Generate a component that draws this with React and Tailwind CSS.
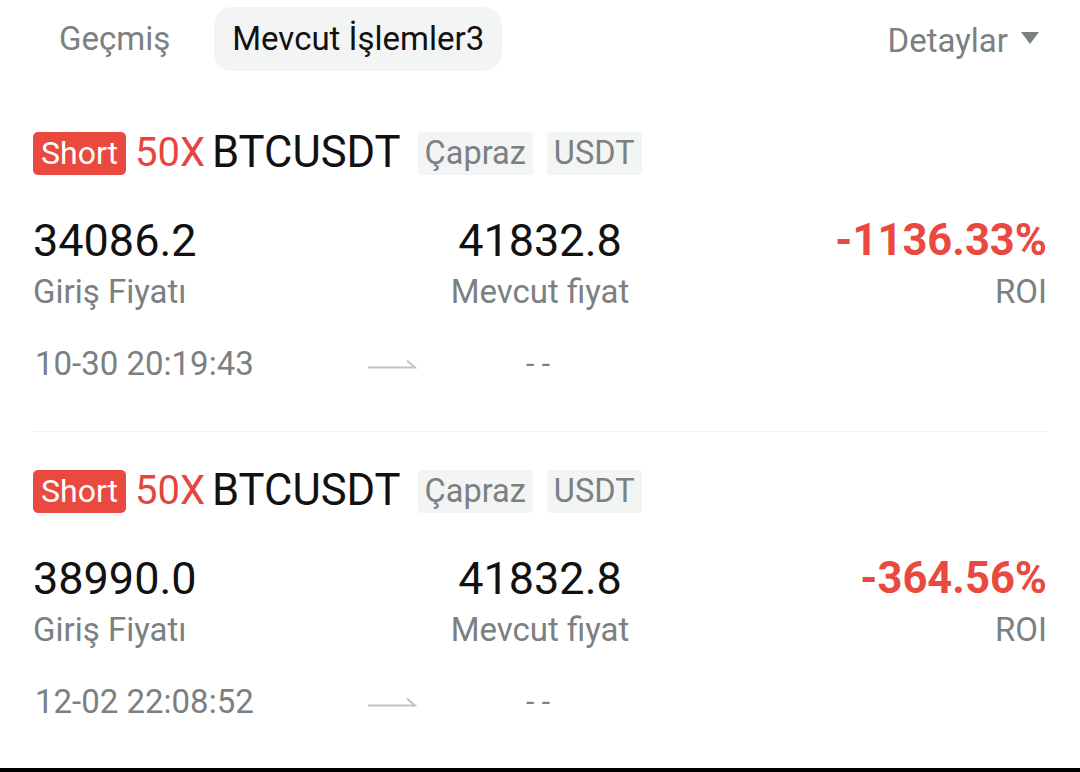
import React from "react";

const positions = [
  { entry: "34086.2", mark: "41832.8", roi: "-1136.33%", time: "10-30 20:19:43" },
  { entry: "38990.0", mark: "41832.8", roi: "-364.56%", time: "12-02 22:08:52" },
];

const Arrow = () => (
  <svg width="50" height="12" viewBox="0 0 50 12" className="block">
    <path d="M1 9.5 H48 L40 2.5" fill="none" stroke="#bfc3c5" strokeWidth="2" />
  </svg>
);

const PositionCard = ({ p, last }) => (
  <div className="px-[33px]">
    {/* header */}
    <div className="flex items-center h-[46px]">
      <span className="bg-[#e9493f] text-white text-[32px] leading-[43px] h-[43px] px-[8px] rounded-[5px]">
        Short
      </span>
      <span className="ml-[9px] text-[#e5453c] text-[40px] leading-none">50X</span>
      <span className="ml-[7px] text-[#111] text-[43.6px] leading-none">BTCUSDT</span>
      <span className="ml-[17px] bg-[#f3f5f5] text-[#7b8081] text-[32.5px] leading-[43px] h-[43px] px-[7px] rounded-[4px]">
        Çapraz
      </span>
      <span className="ml-[14px] bg-[#f3f5f5] text-[#7b8081] text-[32.5px] leading-[43px] h-[43px] px-[7px] rounded-[4px]">
        USDT
      </span>
    </div>

    {/* prices */}
    <div className="grid grid-cols-3 mt-[40px]">
      <div>
        <div className="text-[45px] leading-[50px] text-[#111]">{p.entry}</div>
        <div className="mt-[6px] text-[33px] leading-[40px] text-[#7b8081]">Giriş Fiyatı</div>
      </div>
      <div className="text-center">
        <div className="text-[45px] leading-[50px] text-[#111]">{p.mark}</div>
        <div className="mt-[6px] text-[33px] leading-[40px] text-[#7b8081]">Mevcut fiyat</div>
      </div>
      <div className="text-right">
        <div className="text-[43.5px] leading-[50px] font-bold text-[#e9493f]">{p.roi}</div>
        <div className="mt-[6px] text-[33px] leading-[40px] text-[#7b8081]">ROI</div>
      </div>
    </div>

    {/* time row */}
    <div className="grid grid-cols-3 mt-[32px] h-[40px] items-center">
      <div className="pl-[2px] text-[33px] leading-[40px] text-[#7b8081]">{p.time}</div>
      <div className="grid grid-cols-[48px_1fr_48px] items-center -ml-[4px]">
        <Arrow />
        <div className="text-center text-[30px] leading-[40px] text-[#7b8081]">- -</div>
        <div />
      </div>
      <div />
    </div>

    {!last && <div className="mt-[47px] h-px bg-[#f1f2f3]" />}
  </div>
);

export default function App() {
  return (
    <div
      className="w-[1080px] h-[772px] bg-white flex flex-col overflow-hidden"
      style={{ fontFamily: "Roboto, 'Noto Sans', sans-serif" }}
    >
      <div className="flex-1">
        {/* tabs */}
        <div className="flex items-center pt-[7px] pl-[41px] pr-[40px]">
          <div className="h-[64px] px-[18px] flex items-center text-[33px] text-[#7b8081]">Geçmiş</div>
          <div className="ml-[26px] h-[64px] px-[18px] flex items-center rounded-[18px] bg-[#f3f5f5] text-[33px] text-[#111]">
            Mevcut İşlemler3
          </div>
          <div className="ml-auto mt-[4px] flex items-center text-[33px] text-[#7b8081]">
            Detaylar
            <svg width="20" height="14" viewBox="0 0 20 14" className="ml-[12px] -mt-[6px]">
              <path d="M1 1 H19 L10 13 Z" fill="#7b8081" />
            </svg>
          </div>
        </div>

        <div className="mt-[59px]">
          <PositionCard p={positions[0]} />
          <div className="h-[36px]" />
          <PositionCard p={positions[1]} last />
        </div>
      </div>
      <div className="h-[4px] bg-black" />
    </div>
  );
}
